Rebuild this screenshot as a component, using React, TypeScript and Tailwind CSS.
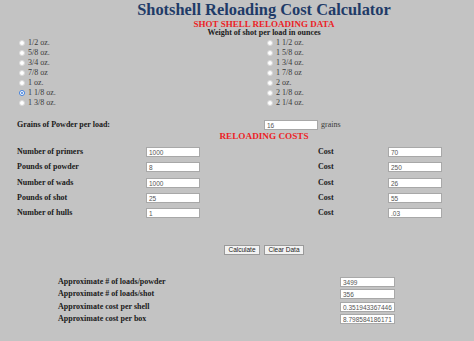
import React from "react";

const leftWeights = ["1/2 oz.", "5/8 oz.", "3/4 oz.", "7/8 oz", "1 oz.", "1 1/8 oz.", "1 3/8 oz."];
const rightWeights = ["1 1/2 oz.", "1 5/8 oz.", "1 3/4 oz.", "1 7/8 oz", "2 oz.", "2 1/8 oz.", "2 1/4 oz."];

const costRows = [
  { label: "Number of primers", qty: "1000", cost: "70" },
  { label: "Pounds of powder", qty: "8", cost: "250" },
  { label: "Number of wads", qty: "1000", cost: "26" },
  { label: "Pounds of shot", qty: "25", cost: "55" },
  { label: "Number of hulls", qty: "1", cost: ".03" },
];

const results = [
  { label: "Approximate # of loads/powder", value: "3499" },
  { label: "Approximate # of loads/shot", value: "356" },
  { label: "Approximate cost per shell", value: "0.351943367446" },
  { label: "Approximate cost per box", value: "8.798584186171" },
];

function Field({ value, w = "w-[54px]" }: { value: string; w?: string }) {
  return (
    <div
      className={`${w} h-[10px] bg-white border border-[#a8a8a8] pl-[2px] text-[6.5px] leading-[9px] text-[#555] overflow-hidden whitespace-nowrap`}
      style={{ fontFamily: '"Liberation Sans", Arial, sans-serif' }}
    >
      {value}
    </div>
  );
}

function Radio({ label, checked }: { label: string; checked?: boolean }) {
  return (
    <div className="flex items-center h-[10px] gap-[3px]">
      {checked ? (
        <span className="w-[6px] h-[6px] rounded-full border border-[#3b7ddd] bg-white flex items-center justify-center">
          <span className="w-[2px] h-[2px] rounded-full bg-[#3b7ddd]" />
        </span>
      ) : (
        <span className="w-[6px] h-[6px] rounded-full border border-[#d8d8d8] bg-white" />
      )}
      <span className="text-[8px] text-[#3a3a3a]">{label}</span>
    </div>
  );
}

export default function App() {
  return (
    <div
      className="w-[474px] h-[341px] bg-[#c3c3c3] overflow-hidden"
      style={{ fontFamily: '"Liberation Serif", "Times New Roman", serif' }}
    >
      <div className="w-[528px]">
        {/* Headings */}
        <h1 className="text-center text-[16.4px] leading-[20px] font-bold text-[#1f3b68]">
          Shotshell Reloading Cost Calculator
        </h1>
        <div className="text-center text-[9px] leading-[8px] font-bold text-[#ec2226]">
          SHOT SHELL RELOADING DATA
        </div>
        <div className="text-center text-[8px] leading-[10px] font-bold text-[#1a1a1a]">
          Weight of shot per load in ounces
        </div>

        {/* Shot weight radios */}
        <div className="grid grid-cols-[248px_1fr] pl-[19px]">
          <div className="flex flex-col">
            {leftWeights.map((w) => (
              <Radio key={w} label={w} checked={w === "1 1/8 oz."} />
            ))}
          </div>
          <div className="flex flex-col">
            {rightWeights.map((w) => (
              <Radio key={w} label={w} />
            ))}
          </div>
        </div>

        {/* Powder */}
        <div className="mt-[11px] grid grid-cols-[247px_57px_auto] items-center pl-[17px] h-[10px]">
          <span className="text-[8px] font-bold text-[#1a1a1a]">Grains of Powder per load:</span>
          <Field value="16" />
          <span className="text-[8px] text-[#3a3a3a]">grains</span>
        </div>

        <div className="mt-[2px] text-center text-[9.2px] leading-[10px] font-bold text-[#ec2226]">
          RELOADING COSTS
        </div>

        {/* Cost table */}
        <div className="mt-[5px] flex flex-col gap-[5.25px] pl-[17px]">
          {costRows.map((r) => (
            <div key={r.label} className="grid grid-cols-[129px_172px_70px_54px] items-center h-[10px]">
              <span className="text-[8px] font-bold text-[#1a1a1a]">{r.label}</span>
              <Field value={r.qty} />
              <span className="text-[8px] font-bold text-[#1a1a1a]">Cost</span>
              <Field value={r.cost} />
            </div>
          ))}
        </div>

        {/* Buttons */}
        <div
          className="mt-[28px] flex justify-center gap-[4px]"
          style={{ fontFamily: '"Liberation Sans", Arial, sans-serif' }}
        >
          <button className="w-[36px] h-[10px] bg-[#f2f2f2] border border-[#9a9a9a] text-[6.5px] leading-[8px] text-[#222]">
            Calculate
          </button>
          <button className="w-[40px] h-[10px] bg-[#f2f2f2] border border-[#9a9a9a] text-[6.5px] leading-[8px] text-[#222]">
            Clear Data
          </button>
        </div>

        {/* Results */}
        <div className="mt-[21px] flex flex-col gap-[2.3px] pl-[58px]">
          {results.map((r) => (
            <div key={r.label} className="grid grid-cols-[282px_55px] items-center h-[10px]">
              <span className="text-[8px] font-bold text-[#1a1a1a]">{r.label}</span>
              <Field value={r.value} w="w-[55px]" />
            </div>
          ))}
        </div>
      </div>
    </div>
  );
}
